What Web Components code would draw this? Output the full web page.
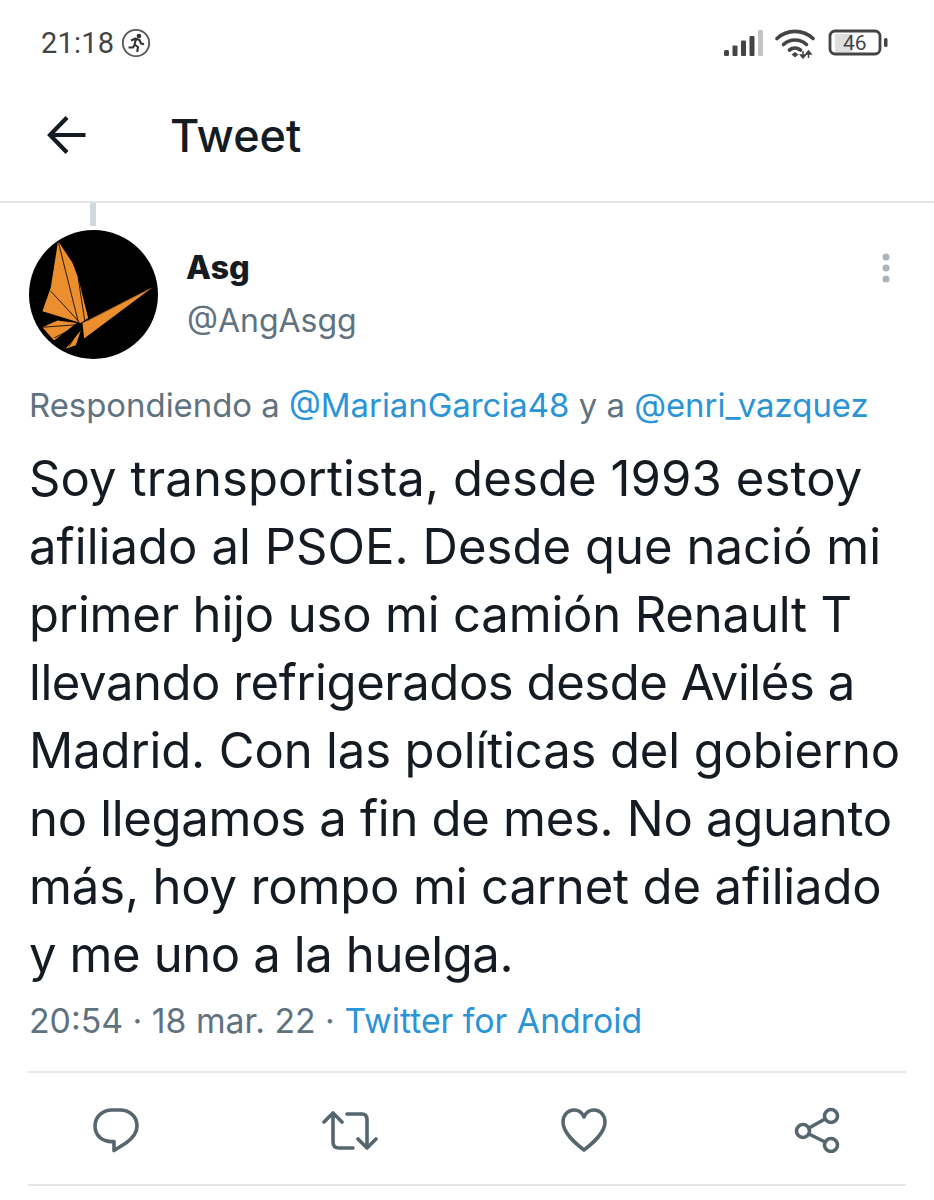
<!DOCTYPE html>
<html>
<head>
<title>Tweet</title>
<meta charset="utf-8"/>
<style>
html, body { margin: 0; background: #fff; }
body { font-family: Inter, Roboto, "Liberation Sans", sans-serif; width: 934px; }
</style>
</head>
<body>

<status-bar></status-bar>
<tweet-header></tweet-header>
<tweet-view>
  <tweet-author slot="author" name="Asg" handle="@AngAsgg"></tweet-author>
  <span slot="reply">Respondiendo a <a>@MarianGarcia48</a> y a <a>@enri_vazquez</a></span>
  <span slot="line" style="letter-spacing: .11px">Soy transportista, desde 1993 estoy</span>
  <span slot="line" style="letter-spacing: .05px">afiliado al PSOE. Desde que nació mi</span>
  <span slot="line" style="letter-spacing: -.17px">primer hijo uso mi camión Renault T</span>
  <span slot="line" style="letter-spacing: -.44px">llevando refrigerados desde Avilés a</span>
  <span slot="line" style="letter-spacing: -.13px">Madrid. Con las políticas del gobierno</span>
  <span slot="line" style="letter-spacing: -.3px">no llegamos a fin de mes. No aguanto</span>
  <span slot="line" style="letter-spacing: -.14px">más, hoy rompo mi carnet de afiliado</span>
  <span slot="line" style="letter-spacing: -.38px">y me uno a la huelga.</span>
  <span slot="meta">20:54 · 18 mar. 22 · <a>Twitter for Android</a></span>
</tweet-view>
<tweet-actions></tweet-actions>

<script>
class StatusBar extends HTMLElement {
  constructor() {
    super()
    this.attachShadow({mode: 'open'}).innerHTML = `
<style>
:host { display: flex; align-items: center; justify-content: space-between; height: 86px; padding: 0 46px 0 41px; box-sizing: border-box; color: #444; font-family: Roboto, sans-serif; }
.left, .right { display: flex; align-items: center; }
.time { font-size: 29px; letter-spacing: .2px; line-height: 34px; }
.left svg { margin-left: 7px; }
.right svg { display: block; }
.wifi { margin-left: 11px; }
.battery { margin-left: 13px; position: relative; width: 60px; height: 28px; }
.battery span { position: absolute; left: 15px; top: 3px; font-size: 21px; line-height: 22px; color: #444; }
</style>
<div class="left">
  <span class="time">21:18</span>
  <svg width="30" height="30" viewBox="0 0 30 30">
    <circle cx="15" cy="15" r="13.2" fill="none" stroke="#555" stroke-width="1.8"/>
    <circle cx="18" cy="8" r="2.3" fill="#333"/>
    <path d="M10 12.5l4.5-2 4 1.5 1.5 3.5 3 .8M15 11l-1.5 5.5 3.5 2.5-.8 5M13.5 17l-1.500 2.500-4.500 0" fill="none" stroke="#333" stroke-width="2.100" stroke-linejoin="round"/>
  </svg>
</div>
<div class="right">
  <svg width="41" height="27" viewBox="0 0 41 27">
    <rect x="1" y="20" width="5" height="6" rx="1.500" fill="#444"/>
    <rect x="9.500" y="15.500" width="5" height="10.500" rx="1" fill="#444"/>
    <rect x="18" y="10.500" width="5" height="15.500" rx="1" fill="#444"/>
    <rect x="26.500" y="6" width="5" height="20" rx="1" fill="#444"/>
    <rect x="35" y="0" width="5" height="26" rx="1" fill="#c4c4c4"/>
  </svg>
  <svg class="wifi" width="40" height="31" viewBox="0 0 40 31">
    <g fill="none" stroke="#444" stroke-width="3.600" stroke-linecap="round">
      <path d="M2 10.500C12 1 28 1 38 10.500"/>
      <path d="M8.500 16.500C15 10.500 25 10.500 31.500 16.500"/>
      <path d="M14.500 22C17.500 19.500 22 19.500 25.500 22"/>
    </g>
    <path d="M16.500 26.500l3.500-2.500 3.500 2.500-3.500 3z" fill="#444"/>
    <path d="M28 23v7M28 30l-2.500-3h5zM33.500 23v7M33.500 23l-2.500 3h5z" fill="#444" stroke="#444" stroke-width="1.500"/>
  </svg>
  <div class="battery">
    <svg width="60" height="28" viewBox="0 0 60 28">
      <rect x="7" y="5" width="17" height="18" fill="#dedede"/>
      <rect x="2" y="2" width="50" height="23" rx="5" fill="none" stroke="#444" stroke-width="2.800"/>
      <rect x="56" y="9" width="3.500" height="9" rx="1.500" fill="#444"/>
    </svg>
    <span>46</span>
  </div>
</div>`
  }
}

class TweetHeader extends HTMLElement {
  constructor() {
    super()
    this.attachShadow({mode: 'open'}).innerHTML = `
<style>
:host { display: flex; align-items: center; height: 117px; padding: 0 0 17px 47px; box-sizing: border-box; border-bottom: 2px solid #e1e6ea; color: #141b22; }
svg { display: block; }
h1 { margin: 2px 0 0 83px; font-size: 45px; font-weight: 500; line-height: 52px; }
</style>
<svg width="40" height="40" viewBox="0 0 40 40">
  <path d="M38.500 20H4M20 2.500L3 20l17 17.500" fill="none" stroke="#141b22" stroke-width="4.200"/>
</svg>
<h1>Tweet</h1>`
  }
}

class TweetAuthor extends HTMLElement {
  constructor() {
    super()
    this.attachShadow({mode: 'open'}).innerHTML = `
<style>
:host { display: flex; position: relative; }
svg.avatar { display: block; width: 129px; height: 129px; flex: none; }
.names { margin: 16px 0 0 29px; }
.name { font-size: 32.500px; font-weight: 800; line-height: 44px; color: #141b22; margin-left: -1px; }
.handle { font-size: 32px; line-height: 44px; margin-top: 9px; color: #5f7280; }
.more { position: absolute; right: 13px; top: 21px; }
</style>
<svg class="avatar" viewBox="85 107 386 386">
  <circle cx="278" cy="300" r="193" fill="#000"/>
  <path d="M172 140L215 205 232 250 262 370 240 385 125 350 150 280z" fill="#ea8e2e"/>
  <path d="M125 398L170 378 228 385 160 438z" fill="#ea8e2e"/>
  <path d="M195 462L240 408 225 452z" fill="#ea8e2e"/>
  <path d="M245 385L455 278 330 372 250 432z" fill="#ea8e2e"/>
  <g fill="none" stroke="#000" stroke-width="2.500">
    <path d="M172 140L232 380M232 250L252 380M150 290L235 382M125 398L235 390M160 430L235 392M205 455L240 395"/>
  </g>
  <path d="M258 380L442 285" fill="none" stroke="#7a4a18" stroke-width="2"/>
</svg>
<div class="names">
  <div class="name"></div>
  <div class="handle"></div>
</div>
<svg class="more" width="12" height="36" viewBox="0 0 12 36">
  <circle cx="6" cy="6" r="3.500" fill="#a9b4bc"/>
  <circle cx="6" cy="17" r="3.500" fill="#a9b4bc"/>
  <circle cx="6" cy="28" r="3.500" fill="#a9b4bc"/>
</svg>`
  }
  connectedCallback() {
    this.shadowRoot.querySelector('.name').textContent = this.getAttribute('name')
    this.shadowRoot.querySelector('.handle').textContent = this.getAttribute('handle')
  }
}

class TweetView extends HTMLElement {
  constructor() {
    super()
    this.attachShadow({mode: 'open'}).innerHTML = `
<style>
:host { display: block; position: relative; padding: 27px 29px 0 29px; }
.thread { position: absolute; left: 90px; top: 0; width: 6px; height: 23px; background: #cfd9df; }
.reply { margin-top: 26px; font-size: 32.900px; line-height: 40px; color: #5f7280; white-space: nowrap; }
.body { display: flex; flex-direction: column; margin-top: 20px; font-size: 49px; line-height: 68px; color: #141b22; }
::slotted([slot=line]) { display: block; white-space: nowrap; }
.meta { margin-top: 12px; font-size: 33.800px; line-height: 40px; color: #5f7280; white-space: nowrap; }
</style>
<div class="thread"></div>
<slot name="author"></slot>
<div class="reply"><slot name="reply"></slot></div>
<div class="body"><slot name="line"></slot></div>
<div class="meta"><slot name="meta"></slot></div>`
  }
}

class TweetActions extends HTMLElement {
  constructor() {
    super()
    this.attachShadow({mode: 'open'}).innerHTML = `
<style>
:host { display: block; margin: 30px 28px 0; height: 115px; box-sizing: border-box; border-top: 2px solid #e4e7ea; border-bottom: 2px solid #e4e7ea; }
.row { display: flex; padding: 34px 0 0 65px; }
.retweet { margin-left: 183px; }
.like { margin-left: 183px; }
.share { margin-left: 187px; }
svg { display: block; }
path, circle { fill: none; stroke: #55666f; stroke-width: 3.600; stroke-linejoin: round; stroke-linecap: round; }
</style>
<div class="row">
  <svg width="46" height="46" viewBox="0 0 46 46">
    <path d="M21 34.500C10 35.500 2 29 2 19 2 9.500 10 3 19 3h8c9.500 0 17 6.500 17 16 0 8-5.500 13-11 17L21 43.500z"/>
  </svg>
  <svg class="retweet" width="56" height="46" viewBox="0 0 56 46">
    <path d="M2 15L11 6l9 9M11 7V35q0 6 6 6H31"/>
    <path d="M25 7H40q5 0 5 6V41M36 32l9 9 9-9"/>
  </svg>
  <svg class="like" width="46" height="46" viewBox="0 0 46 46">
    <path d="M23 43C14 36 2 26 2 15 2 8 7 3 13 3c5 0 8 2.500 10 7 2-4.500 5-7 10-7 6 0 11 5 11 12 0 11-12 21-21 28z"/>
  </svg>
  <svg class="share" width="46" height="46" viewBox="0 0 46 46">
    <circle cx="9" cy="24" r="6.500"/>
    <circle cx="37" cy="9" r="6.500"/>
    <circle cx="37" cy="38" r="6.500"/>
    <path d="M15 21L31 12M15 27L31 35"/>
  </svg>
</div>`
  }
}

customElements.define('status-bar', StatusBar)
customElements.define('tweet-header', TweetHeader)
customElements.define('tweet-author', TweetAuthor)
customElements.define('tweet-view', TweetView)
customElements.define('tweet-actions', TweetActions)

// Link colour for the light DOM text passed through the slots.
document.querySelectorAll('tweet-view a').forEach(a => { a.style.color = '#2a94d6' })
</script>
</body>
</html>
